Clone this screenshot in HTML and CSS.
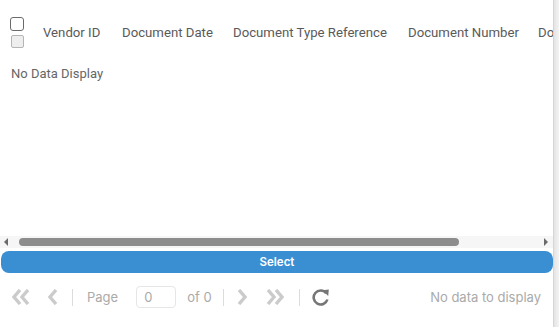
FILE: index.html
```html
<!DOCTYPE html>
<html lang="en">
<head>
    <meta charset="UTF-8">
    <title>Vendor Documents</title>
    <link rel="stylesheet" href="styles.css">
</head>
<body>
    <div class="page">
        <div class="grid">
            <div class="grid-header">
                <div class="check-col">
                    <span class="check check-main"></span>
                    <span class="check check-sub"></span>
                </div>
                <div class="col col-vendor">Vendor ID</div>
                <div class="col col-date">Document Date</div>
                <div class="col col-type">Document Type Reference</div>
                <div class="col col-number">Document Number</div>
                <div class="col col-more">Document Status</div>
            </div>
            <div class="grid-body">
                <div class="empty">No Data Display</div>
            </div>
            <div class="hscroll">
                <span class="arrow arrow-left"></span>
                <div class="track"><div class="thumb"></div></div>
                <span class="arrow arrow-right"></span>
            </div>
            <button class="select-btn">Select</button>
            <div class="pager">
                <span class="pg-icon first">
                    <svg width="19" height="16" viewBox="0 0 19 16"><path d="M8 1 L2 8 L8 15 M16 1 L10 8 L16 15" fill="none" stroke="#cbcbcb" stroke-width="3.4"/></svg>
                </span>
                <span class="pg-icon prev">
                    <svg width="12" height="16" viewBox="0 0 12 16"><path d="M9 1 L3 8 L9 15" fill="none" stroke="#cbcbcb" stroke-width="3.4"/></svg>
                </span>
                <span class="sep sep-first"></span>
                <span class="pg-text page-label">Page</span>
                <input class="pg-input" type="text" value="0">
                <span class="pg-text">of 0</span>
                <span class="sep"></span>
                <span class="pg-icon next">
                    <svg width="12" height="16" viewBox="0 0 12 16"><path d="M3 1 L9 8 L3 15" fill="none" stroke="#cbcbcb" stroke-width="3.4"/></svg>
                </span>
                <span class="pg-icon">
                    <svg width="19" height="16" viewBox="0 0 19 16"><path d="M3 1 L9 8 L3 15 M11 1 L17 8 L11 15" fill="none" stroke="#cbcbcb" stroke-width="3.4"/></svg>
                </span>
                <span class="sep"></span>
                <span class="pg-icon refresh">
                    <svg width="18" height="18" viewBox="0 0 18 18"><path d="M14.2 5.2 A7 7 0 1 0 15.4 11.5" fill="none" stroke="#767676" stroke-width="2.6"/><path d="M10.5 2.2 L16.8 1.5 L16.2 8 Z" fill="#767676"/></svg>
                </span>
                <span class="pg-status">No data to display</span>
            </div>
        </div>
        <div class="vgutter"></div>
    </div>
</body>
</html>
```
FILE: styles.css
```css
body { margin: 0; background: #fff; font-family: Roboto, "Liberation Sans", Arial, sans-serif; }
.page { display: flex; width: 559px; height: 327px; overflow: hidden; }
.grid { width: 553px; display: flex; flex-direction: column; }
.vgutter { width: 5px; border-left: 1px solid #d6d6d6; background: linear-gradient(to right, #e4e4e4, #f3f3f3); }

.grid-header { height: 56px; flex: none; display: flex; align-items: center; white-space: nowrap; overflow: hidden; padding-top: 8px; box-sizing: border-box; }
.check-col { width: 43px; flex: none; display: flex; flex-direction: column; padding-left: 10px; box-sizing: border-box; gap: 4px; }
.check { display: block; box-sizing: border-box; }
.check-main { width: 14px; height: 14px; border: 1px solid #6a6a6a; border-radius: 3px; background: #fff; }
.check-sub { width: 13px; height: 13px; margin-left: 1px; border: 1px solid #b5b5b5; border-radius: 2px; background: #eeeeee; }
.col { flex: none; font-size: 13.2px; color: #5a5a5a; }
.col-vendor { width: 79px; }
.col-date { width: 111px; }
.col-type { width: 175px; }
.col-number { width: 130px; }

.grid-body { height: 180px; flex: none; }
.empty { padding: 10px 0 0 11px; font-size: 13px; color: #666; }

.hscroll { height: 12px; flex: none; display: flex; align-items: center; background: #f6f6f6; }
.arrow { width: 0; height: 0; border-top: 4px solid transparent; border-bottom: 4px solid transparent; }
.arrow-left { border-right: 4px solid #6b6b6b; margin: 0 11px 0 4px; }
.arrow-right { border-left: 4px solid #6b6b6b; margin: 0 5px 0 5px; }
.track { flex: 1; }
.thumb { width: 440px; height: 8px; border-radius: 4px; background: #8d8d8d; }

.select-btn { flex: none; margin: 3px 0 0 1px; height: 22px; border: none; border-radius: 8px; background: #3a8fd3; color: #fff; font-family: Inter, "Open Sans", sans-serif; font-weight: 600; font-size: 11.5px; padding: 0; }

.pager { flex: none; display: flex; align-items: center; height: 22px; margin-top: 13px; padding-left: 12px; font-family: Inter, "Open Sans", sans-serif; font-size: 13px; color: #aaaaaa; }
.pg-icon { display: flex; align-items: center; margin-right: 15px; }
.pg-icon.first { margin-right: 16px; }
.pg-icon.prev { margin-right: 13px; }
.pg-icon.next { margin-right: 17px; }
.sep { width: 1px; height: 17px; background: #dcdcdc; margin-right: 12px; }
.sep-first { margin-right: 14px; }
.pg-text { margin-right: 11px; }
.page-label { margin-right: 18px; }
.pg-input { width: 40px; height: 22px; box-sizing: border-box; border: 1px solid #e6e6e6; border-radius: 4px; padding: 0 7px; font-family: inherit; font-size: 13px; color: #aaaaaa; margin-right: 11px; }
.pg-status { margin-left: auto; margin-right: 12px; }
```
